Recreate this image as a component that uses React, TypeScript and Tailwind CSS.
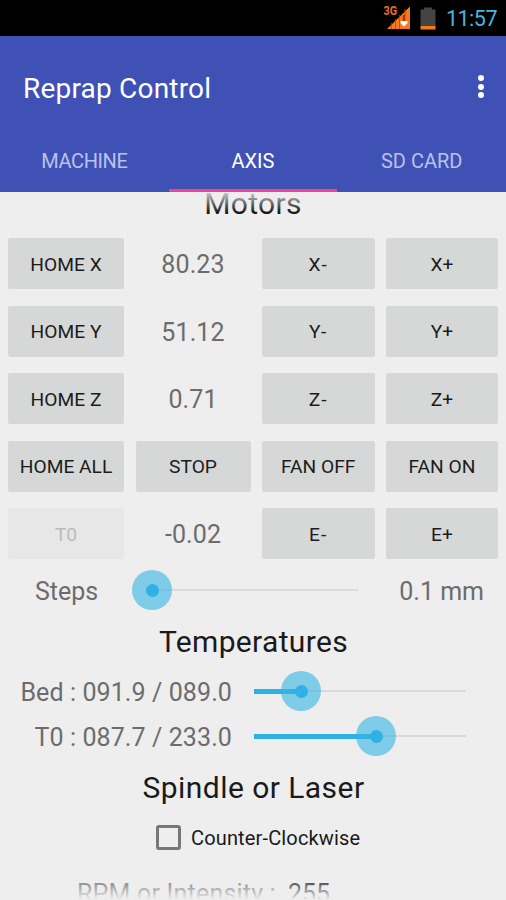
import clsx from "clsx";

const rows = [
  { home: "HOME X", value: "80.23", minus: "X-", plus: "X+" },
  { home: "HOME Y", value: "51.12", minus: "Y-", plus: "Y+" },
  { home: "HOME Z", value: "0.71", minus: "Z-", plus: "Z+" },
  { home: "HOME ALL", stop: true, minus: "FAN OFF", plus: "FAN ON" },
  { home: "T0", value: "-0.02", minus: "E-", plus: "E+", disabled: true },
];

function Button({ label, disabled }: { label: string; disabled?: boolean }) {
  return (
    <button
      disabled={disabled}
      className={clsx(
        "h-[51px] rounded-[2px] pt-[3px] text-[19.2px] whitespace-nowrap",
        label.endsWith("-") && "tracking-[1.2px]",
        disabled ? "bg-[#e7e7e7] text-[#bcbcbc]" : "bg-[#d6d8d7] text-[#1c1c1c]"
      )}
    >
      {label}
    </button>
  );
}

function Slider({ value, short }: { value: number; short?: boolean }) {
  return (
    <div className={clsx("relative flex h-10 items-center", short ? "w-[206px]" : "w-[212px]")}>
      <div className="h-[2px] w-full bg-[#dadada]" />
      <div
        className="absolute left-0 h-[5px] bg-[#2fb1e3]"
        style={{ width: value }}
      />
      <div
        className="absolute flex size-10 -translate-x-1/2 items-center justify-center rounded-full bg-[#33b5e5]/60"
        style={{ left: value }}
      >
        <div className="size-[13px] rounded-full bg-[#2fb1e3]" />
      </div>
    </div>
  );
}

function StatusBar() {
  return (
    <div className="flex h-9 items-center justify-end bg-black pr-[9px]">
      <svg width="28" height="26" viewBox="0 0 28 26" className="mr-[9px]">
        <text x="0.5" y="9.5" fontSize="12.5" fontWeight="700" textLength="13.5" lengthAdjust="spacingAndGlyphs" fill="#e8702a">
          3G
        </text>
        <path d="M4 24 L27 1.5 V24 Z" fill="#f47a20" />
        <path d="M8.5 18 V24 M12.5 14 V24 M16.5 10 V24" stroke="#a84a12" strokeWidth="0.8" />
        <path d="M22 4 V11" stroke="#a84a12" strokeWidth="1" />
        <path d="M19.7 10 H22.3 V17 H19.7 Z" fill="#c22d17" />
        <path d="M17.5 16 H24.5 V18 L21 21.5 L17.5 18 Z" fill="#fff" />
      </svg>
      <svg width="16" height="23" viewBox="0 0 16 23" className="mr-[10px]">
        <path d="M4 0.5 H12 V2.5 H15.5 V19 H0.5 V2.5 H4 Z" fill="#444" />
        <path d="M0.5 19 H15.5 V22.5 H0.5 Z" fill="#f47a12" />
      </svg>
      <span className="pt-[2px] text-[21.5px] leading-9 tracking-[-0.5px] text-[#4ab5dc]">11:57</span>
    </div>
  );
}

function Header() {
  return (
    <header className="h-[156px] bg-[#3f51b5] text-white">
      <div className="flex h-[103px] items-center justify-between pr-[22px] pl-[23px]">
        <h1 className="pt-[2px] text-[28px] leading-8 font-normal tracking-[0.2px]">Reprap Control</h1>
        <div className="flex flex-col gap-[2.4px] pb-[2px]">
          <i className="size-[6px] rounded-full bg-white" />
          <i className="size-[6px] rounded-full bg-white" />
          <i className="size-[6px] rounded-full bg-white" />
        </div>
      </div>
      <nav className="grid h-[53px] grid-cols-3 text-center text-[20px] leading-[44px]">
        <span className="tracking-[-0.4px] text-[#b9c2ec]">MACHINE</span>
        <span className="border-b-3 border-[#f0448a]">AXIS</span>
        <span className="text-[#b9c2ec]">SD CARD</span>
      </nav>
    </header>
  );
}

export default function App() {
  return (
    <div className="h-[900px] w-[506px] overflow-hidden bg-[#eeeeee] font-['Roboto',sans-serif] text-[#1a1a1a]">
      <StatusBar />
      <Header />

      <main className="relative h-[708px] overflow-hidden">
        <h2 className="h-[46px] text-center text-[30px] leading-[24px] tracking-[0.3px]">Motors</h2>

        <div className="grid grid-cols-[116px_115px_112.5px_112px] gap-x-[11.5px] gap-y-[16.5px] pl-2">
          {rows.map((row) => (
            <div key={row.home} className="contents">
              <Button label={row.home} disabled={row.disabled} />
              {row.stop ? (
                <Button label="STOP" />
              ) : (
                <span className="h-[51px] text-center text-[25px] leading-[53px] tracking-[0.1px] text-[#6c6c6c]">
                  {row.value}
                </span>
              )}
              <Button label={row.minus} />
              <Button label={row.plus} />
            </div>
          ))}
        </div>

        <div className="mt-[11px] flex h-10 items-center pr-[22px] pl-[35px] text-[25px] text-[#6c6c6c]">
          <span className="w-[117px] pt-[3px]">Steps</span>
          <Slider value={0} short />
          <span className="ml-auto pt-[3px]">0.1 mm</span>
        </div>

        <h2 className="mt-[12px] h-[40px] pl-px text-center text-[30px] leading-[40px] tracking-[0.35px]">Temperatures</h2>

        <div className="mt-[9px] flex h-10 items-center text-[25px] tracking-[0.1px] text-[#6c6c6c]">
          <span className="mr-[22px] w-[232px] pt-[3px] text-right">Bed : 091.9 / 089.0</span>
          <Slider value={47} />
        </div>
        <div className="mt-[5px] flex h-10 items-center text-[25px] tracking-[0.1px] text-[#6c6c6c]">
          <span className="mr-[22px] w-[232px] pt-[3px] text-right">T0 : 087.7 / 233.0</span>
          <Slider value={122} />
        </div>

        <h2 className="mt-[11px] h-[40px] pl-px text-center text-[30px] leading-[42px] tracking-[0.45px]">Spindle or Laser</h2>

        <label className="mt-[18px] flex h-[25px] items-center pl-[156px] text-[20px] tracking-[0.15px]">
          <span className="mr-[10px] size-[25px] rounded-[3px] border-3 border-[#777777]" />
          Counter-Clockwise
        </label>

        <div className="mt-[24px] flex h-10 items-center pl-[77px] text-[25px]">
          <span className="w-[211px] tracking-[0.2px] whitespace-nowrap text-[#6c6c6c]">RPM or Intensity :</span>
          <span>255</span>
        </div>

        <div className="absolute inset-x-0 top-0 h-[20px] bg-linear-to-b from-[#eeeeee]/85 to-[#eeeeee]/0" />
        <div className="absolute inset-x-0 bottom-0 h-[24px] bg-linear-to-t from-[#eeeeee] to-[#eeeeee]/0" />
      </main>
    </div>
  );
}
